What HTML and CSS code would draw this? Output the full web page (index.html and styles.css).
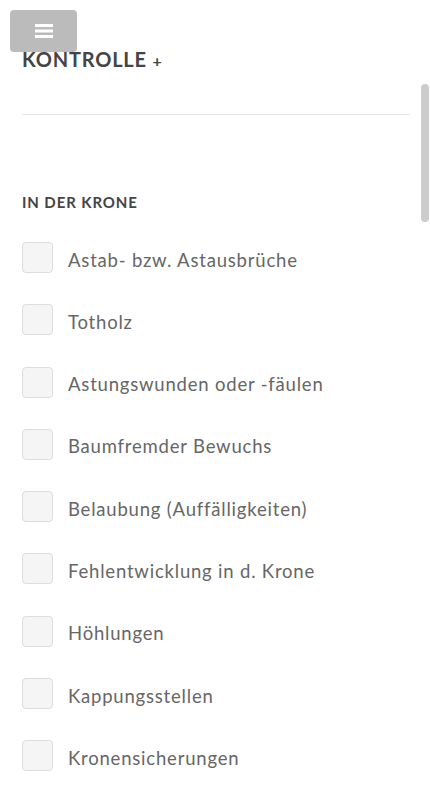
FILE: index.html
```html
<!DOCTYPE html>
<html lang="de">
<head>
<meta charset="utf-8">
<title>Kontrolle</title>
<link rel="stylesheet" href="styles.css">
</head>
<body>
<button class="menu-btn" aria-label="Menü">
  <svg width="18" height="14" viewBox="0 0 18 14"><rect x="0" y="0" width="18" height="3" fill="#fff"/><rect x="0" y="5.5" width="18" height="3" fill="#fff"/><rect x="0" y="11" width="18" height="3" fill="#fff"/></svg>
</button>
<div class="scrollbar"></div>
<main class="page">
  <h1 class="title">KONTROLLE <span class="plus">+</span></h1>
  <hr class="divider">
  <h2 class="section">IN DER KRONE</h2>
  <ul class="checks">
    <li class="check"><span class="box"></span><span class="label">Astab- bzw. Astausbrüche</span></li>
    <li class="check"><span class="box"></span><span class="label">Totholz</span></li>
    <li class="check"><span class="box"></span><span class="label">Astungswunden oder -fäulen</span></li>
    <li class="check"><span class="box"></span><span class="label">Baumfremder Bewuchs</span></li>
    <li class="check"><span class="box"></span><span class="label">Belaubung (Auffälligkeiten)</span></li>
    <li class="check"><span class="box"></span><span class="label">Fehlentwicklung in d. Krone</span></li>
    <li class="check"><span class="box"></span><span class="label">Höhlungen</span></li>
    <li class="check"><span class="box"></span><span class="label">Kappungsstellen</span></li>
    <li class="check"><span class="box"></span><span class="label">Kronensicherungen</span></li>
  </ul>
</main>
</body>
</html>
```
FILE: styles.css
```css
html, body {
  margin: 0;
  padding: 0;
  background: #fff;
  overflow: hidden;
}
body {
  font-family: "Lato", "Open Sans", sans-serif;
  color: #666;
}
.menu-btn {
  position: absolute;
  left: 10px;
  top: 10px;
  width: 67px;
  height: 42px;
  border: 0;
  border-radius: 4px;
  background: #bbbbbb;
  display: flex;
  align-items: center;
  justify-content: center;
  padding: 0;
}
.scrollbar {
  position: absolute;
  right: 1px;
  top: 84px;
  width: 8px;
  height: 138px;
  border-radius: 4px;
  background: #cccccc;
}
.page {
  padding: 0 20px 0 22px;
}
.title {
  margin: 0;
  padding-top: 48px;
  font-size: 20px;
  font-weight: 700;
  color: #444;
  line-height: 22px;
  letter-spacing: 0.8px;
}
.plus {
  font-size: 16px;
  font-weight: 700;
}
.divider {
  border: 0;
  border-top: 1px solid #e6e6e6;
  margin: 42px 0 0 0;
}
.section {
  margin: 78px 0 0 0;
  font-size: 15px;
  font-weight: 700;
  color: #444;
  line-height: 18px;
  letter-spacing: 0.9px;
}
.checks {
  list-style: none;
  margin: 31px 0 0 0;
  padding: 0;
  display: flex;
  flex-direction: column;
  gap: 31.3px;
}
.check {
  display: flex;
  align-items: center;
  gap: 15px;
  height: 31px;
}
.box {
  flex: none;
  width: 29px;
  height: 29px;
  border: 1px solid #dddddd;
  border-radius: 4px;
  background: #f5f5f5;
}
.label {
  font-size: 18.5px;
  color: #666;
  padding-top: 4px;
  letter-spacing: 0.8px;
}
```
